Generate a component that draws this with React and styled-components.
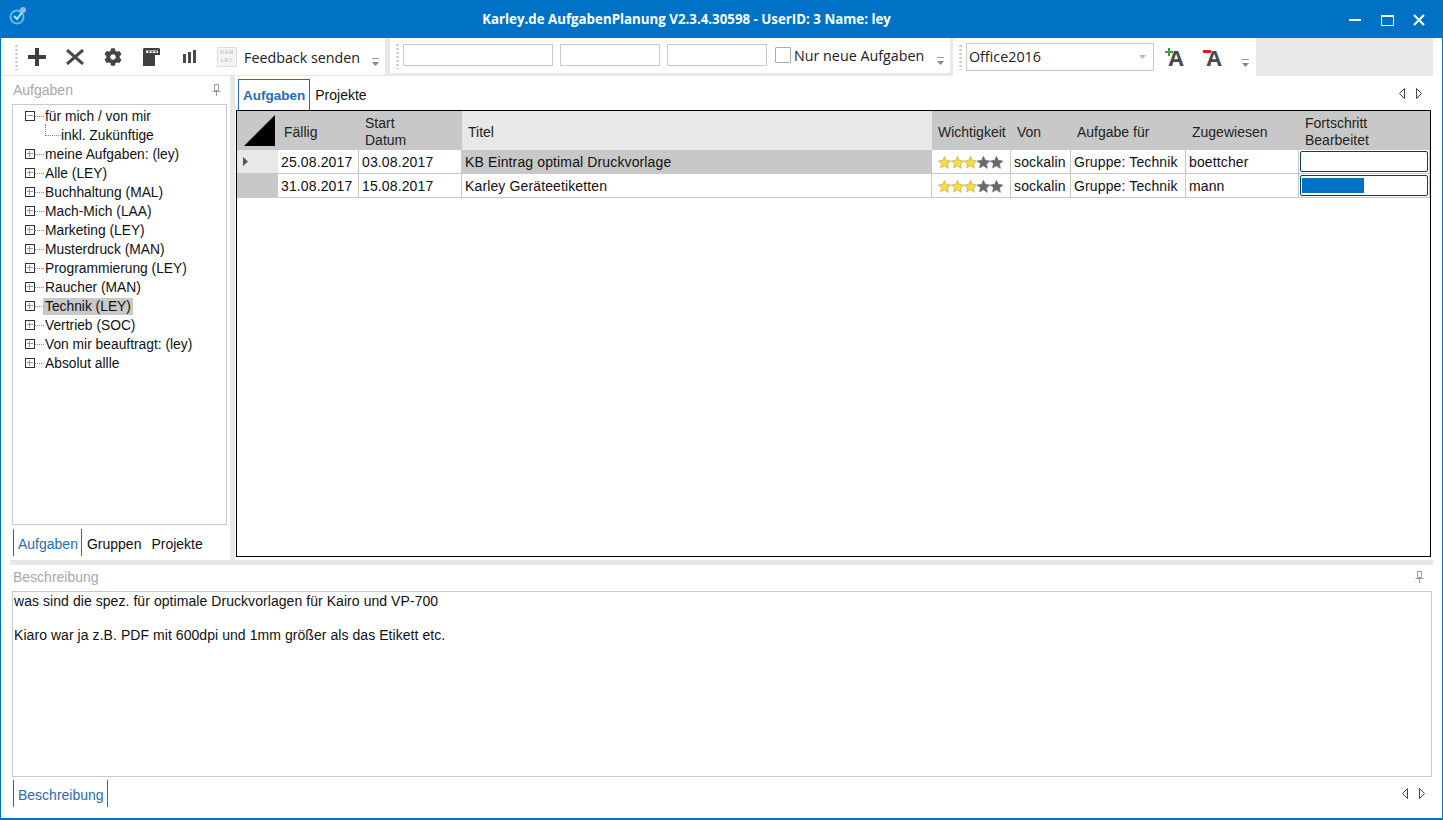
import React from "react";
import styled, { createGlobalStyle } from "styled-components";
import { FaCog } from "react-icons/fa";

const blue = "#0072c6";
const line = "#c8c8c8";
const soft = "#e8e8e8";

const GlobalStyle = createGlobalStyle`
  html, body {
    margin: 0;
    overflow: hidden;
    background: #fff;
  }
  * {
    box-sizing: border-box;
  }
`;

//window frame
const Window = styled.div`
  width: 1443px;
  height: 820px;
  display: flex;
  flex-direction: column;
  background: #fff;
  border: 1px solid ${blue};
  border-top: 0;
  border-bottom-width: 2px;
  font-family: "Liberation Sans", Arial, sans-serif;
  font-size: 14px;
  color: #111;
`;

const TitleBar = styled.div`
  height: 38px;
  flex: none;
  display: flex;
  align-items: center;
  margin: 0 -1px;
  padding: 0 8px 0 9px;
  background: ${blue};
  color: #fff;
`;

const AppIcon = styled.svg`
  width: 19px;
  height: 19px;
  flex: none;
  margin-top: -8px;
`;

const TitleText = styled.div`
  flex: 1;
  text-align: center;
  padding-left: 6px;
  font-family: "Open Sans", sans-serif;
  font-weight: 700;
  font-size: 13.3px;
`;

const WinButton = styled.div`
  width: 32px;
  height: 38px;
  padding-top: 2px;
  display: flex;
  align-items: center;
  justify-content: center;
`;

//toolbars
const ToolRow = styled.div`
  height: 38px;
  flex: none;
  display: flex;
  align-items: flex-start;
  margin-right: 9px;
  background: ${soft};
`;

const Strip = styled.div`
  display: flex;
  align-items: center;
  height: ${(p) => p.$height}px;
  width: ${(p) => p.$width}px;
  margin-left: ${(p) => p.$left || 0}px;
  padding-left: ${(p) => p.$pad}px;
  background: #fff;
  font-family: "Open Sans", sans-serif;
  font-size: 14.3px;
`;

const Grip = styled.div`
  width: 3px;
  height: 26px;
  flex: none;
  background: radial-gradient(circle, #c4c4c4 1px, transparent 1.3px) 0 0 / 3px 4px;
`;

const ToolButton = styled.div`
  width: 38px;
  height: 36px;
  flex: none;
  display: flex;
  align-items: center;
  justify-content: center;
  color: #444;
`;

const LogoBox = styled.div`
  width: 20px;
  height: 20px;
  flex: none;
  margin: 0 7px 0 9px;
  border: 1px solid #ddd;
  background: #f4f4f4;
  color: #b5b5b5;
  font-family: "Liberation Sans", sans-serif;
  font-size: 6px;
  line-height: 8px;
  letter-spacing: 0.4px;
  text-align: center;
`;

const Label = styled.span`
  white-space: nowrap;
  color: #222;
  margin-top: ${(p) => p.$top || 0}px;
`;

const Overflow = styled.svg`
  width: 7px;
  height: 8px;
  flex: none;
  margin-top: 11px;
  margin-left: ${(p) => p.$left}px;
`;

const TextInput = styled.div`
  width: ${(p) => p.$width}px;
  height: 22px;
  flex: none;
  margin-left: ${(p) => p.$left}px;
  margin-top: -2px;
  border: 1px solid ${line};
`;

const Check = styled.div`
  width: 16px;
  height: 16px;
  flex: none;
  margin: -2px 3px 0 8px;
  border: 1px solid #aaa;
  border-radius: 1px;
`;

const Combo = styled.div`
  width: 188px;
  height: 28px;
  flex: none;
  display: flex;
  align-items: center;
  justify-content: space-between;
  margin-left: 4px;
  margin-top: -1px;
  padding: 0 7px 0 2px;
  border: 1px solid ${line};
  color: #222;
`;

const FontButton = styled.div`
  position: relative;
  width: 38px;
  height: 36px;
  flex: none;
  margin-left: ${(p) => p.$left || 0}px;
  text-align: center;
  font-family: "Open Sans", sans-serif;
  font-weight: 700;
  font-size: 22px;
  line-height: 36px;
  color: #4a4a4a;
`;

const FontBadge = styled.svg`
  position: absolute;
  left: 8px;
  top: 9px;
  width: 8px;
  height: 8px;
`;

//main area
const Main = styled.div`
  flex: 1;
  min-height: 0;
  display: flex;
  flex-direction: column;
  padding: 0 9px;
`;

const TopArea = styled.div`
  height: 484px;
  flex: none;
  display: flex;
`;

const LeftPanel = styled.div`
  width: 220px;
  flex: none;
  display: flex;
  flex-direction: column;
`;

const VSplit = styled.div`
  width: 5px;
  flex: none;
  background: ${soft};
`;

const HSplit = styled.div`
  height: 5px;
  flex: none;
  background: ${soft};
`;

const PanelHead = styled.div`
  height: ${(p) => p.$height}px;
  flex: none;
  display: flex;
  align-items: center;
  justify-content: space-between;
  padding: 0 ${(p) => p.$right}px ${(p) => p.$bottom || 0}px 3px;
  color: #a8a8a8;
`;

const Tree = styled.div`
  flex: 1;
  margin: 0 3px 0 2px;
  padding-top: 2px;
  border: 1px solid ${line};
  font-size: 13.8px;
`;

const TreeRow = styled.div`
  position: relative;
  height: 19px;
  display: flex;
  align-items: center;
  padding-left: ${(p) => (p.$child ? 48 : 32)}px;
  white-space: nowrap;
  &::before {
    content: "";
    position: absolute;
    left: ${(p) => (p.$child ? 32 : 22)}px;
    top: ${(p) => (p.$child ? -2 : 9)}px;
    width: ${(p) => (p.$child ? 15 : 9)}px;
    height: ${(p) => (p.$child ? 11 : 0)}px;
    border-bottom: 1px dotted #888;
    border-left: ${(p) => (p.$child ? "1px dotted #888" : 0)};
  }
`;

const Expander = styled.div`
  position: absolute;
  left: 12px;
  top: 4px;
  width: 10px;
  height: 10px;
  border: 1px solid #333;
  background: #fff;
  z-index: 1;
  &::before {
    content: "";
    position: absolute;
    left: 1px;
    right: 1px;
    top: 3px;
    height: 1px;
    background: #999;
  }
  &::after {
    content: "";
    display: ${(p) => (p.$open ? "none" : "block")};
    position: absolute;
    left: 3px;
    top: 1px;
    bottom: 1px;
    width: 1px;
    background: #999;
  }
`;

const TreeLabel = styled.span`
  padding: 1px 2px;
  margin: 0 0 0 -2px;
  background: ${(p) => (p.$selected ? line : "transparent")};
`;

const BottomTabs = styled.div`
  height: 27px;
  flex: none;
  display: flex;
  align-items: center;
  margin: ${(p) => p.$top}px 0 ${(p) => p.$bottom}px 3px;
`;

const BottomTab = styled.div`
  height: 27px;
  display: flex;
  align-items: center;
  padding: 3px ${(p) => (p.$active ? 3 : 0)}px 0 ${(p) => (p.$active ? 4 : 0)}px;
  margin-left: ${(p) => p.$left || 0}px;
  color: ${(p) => (p.$active ? "#1f6db5" : "#111")};
  border-left: ${(p) => (p.$active ? "1px solid #1f6db5" : 0)};
  border-right: ${(p) => (p.$active ? "1px solid #1f6db5" : 0)};
`;

const RightPanel = styled.div`
  flex: 1;
  min-width: 0;
  display: flex;
  flex-direction: column;
  padding-bottom: 3px;
`;

const TabRow = styled.div`
  height: 34px;
  flex: none;
  display: flex;
  align-items: flex-end;
  padding: 0 11px 0 3px;
`;

const TopTab = styled.div`
  height: 31px;
  padding: 0 4px;
  display: flex;
  align-items: center;
  border: ${(p) => (p.$active ? "1px solid #1f6db5" : 0)};
  border-bottom: 0;
  font-weight: ${(p) => (p.$active ? 700 : 400)};
  font-size: ${(p) => (p.$active ? 13.5 : 14)}px;
  color: ${(p) => (p.$active ? "#1f6db5" : "#111")};
  margin-left: ${(p) => p.$left || 0}px;
`;

const Arrows = styled.div`
  display: flex;
  gap: 11px;
  margin-left: auto;
  align-self: center;
  margin-top: ${(p) => p.$top || 0}px;
`;

//grid
const GridBox = styled.div`
  flex: 1;
  margin: 0 2px 0 1px;
  border: 1px solid #000;
`;

const Table = styled.table`
  width: 100%;
  table-layout: fixed;
  border-collapse: separate;
  border-spacing: 0;
`;

const Head = styled.th`
  height: 39px;
  padding: ${(p) => (p.$two ? 2 : 4)}px 0 0 ${(p) => p.$pad ?? 6}px;
  background: ${(p) => (p.$light ? soft : line)};
  font-weight: 400;
  font-size: 14px;
  line-height: 17px;
  text-align: left;
  color: #222;
`;

const Corner = styled.div`
  width: 31px;
  height: 31px;
  margin: -2px 0 0 7px;
  background: #000;
  clip-path: polygon(100% 0, 100% 100%, 0 100%);
`;

const RowHead = styled.td`
  height: 24px;
  padding: 0 0 0 6px;
  background: ${(p) => (p.$current ? soft : line)};
  border-bottom: 1px solid ${line};
`;

const Cell = styled.td`
  height: 24px;
  padding: 1px 3px 0;
  background: ${(p) => (p.$hilite ? line : "#fff")};
  border-right: 1px solid ${line};
  border-bottom: 1px solid ${line};
  white-space: nowrap;
  overflow: hidden;
  letter-spacing: 0.13px;
`;

const Stars = styled.div`
  display: flex;
  margin-left: 3px;
`;

const Progress = styled.div`
  height: 21px;
  margin: -1px 0 0 -2px;
  width: 128px;
  padding: 2px 1px;
  border: 1px solid #0b3c5d;
  border-radius: 2px;
  background: #fff;
`;

const ProgressFill = styled.div`
  height: 100%;
  background: ${blue};
`;

const RowArrow = styled.svg`
  display: block;
  width: 5px;
  height: 9px;
`;

//description
const BottomArea = styled.div`
  flex: 1;
  min-height: 0;
  display: flex;
  flex-direction: column;
`;

const Description = styled.div`
  height: 186px;
  flex: none;
  margin: 0 1px 0 2px;
  padding: 1px 1px;
  border: 1px solid ${line};
  line-height: 17px;
  letter-spacing: 0.06px;
  white-space: pre-line;
`;

const BottomBar = styled.div`
  display: flex;
  align-items: center;
  justify-content: space-between;
  padding-right: 8px;
`;

function Pin() {
  return (
    <svg width="9" height="12" viewBox="0 0 9 12" fill="none" stroke="#9a9a9a">
      <path d="M2.5 .5h4v6h-4zM.5 7.5h8M4.5 8v4" />
    </svg>
  );
}

function NavArrows({ top }) {
  return (
    <Arrows $top={top}>
      <svg width="6" height="11" viewBox="0 0 6 11" fill="none" stroke="#444">
        <path d="M5.5.5v10L.5 5.5z" />
      </svg>
      <svg width="6" height="11" viewBox="0 0 6 11" fill="none" stroke="#444">
        <path d="M.5.5v10l5-5z" />
      </svg>
    </Arrows>
  );
}

function OverflowMark({ left }) {
  return (
    <Overflow $left={left} viewBox="0 0 7 8">
      <path d="M0 .5h7" stroke="#999" />
      <path d="M0 4h7L3.5 8z" fill="#888" />
    </Overflow>
  );
}

function StarIcon({ on }) {
  return (
    <svg width="13" height="13" viewBox="0 0 24 24">
      <path
        d="M12 1l3.4 7.3 7.9 1-5.800 5.500 1.500 7.900L12 18l-7 3.700 1.500-7.900L.7 9.300l7.900-1z"
        fill={on ? "#f8dc40" : "#6a6a6a"}
        stroke={on ? "#c8b050" : "#6a6a6a"}
        strokeWidth="1.5"
      />
    </svg>
  );
}

function Rating({ value }) {
  return (
    <Stars>
      {[1, 2, 3, 4, 5].map((n) => (
        <StarIcon key={n} on={n <= value} />
      ))}
    </Stars>
  );
}

const treeItems = [
  "meine Aufgaben: (ley)",
  "Alle (LEY)",
  "Buchhaltung (MAL)",
  "Mach-Mich (LAA)",
  "Marketing (LEY)",
  "Musterdruck (MAN)",
  "Programmierung (LEY)",
  "Raucher (MAN)",
  "Technik (LEY)",
  "Vertrieb (SOC)",
  "Von mir beauftragt: (ley)",
  "Absolut allle",
];

const tasks = [
  { due: "25.08.2017", start: "03.08.2017", title: "KB Eintrag optimal Druckvorlage", to: "boettcher", done: 0 },
  { due: "31.08.2017", start: "15.08.2017", title: "Karley Geräteetiketten", to: "mann", done: 50 },
];

export default function App() {
  return (
    <>
      <GlobalStyle />
      <Window>
        <TitleBar>
          <AppIcon viewBox="0 0 19 19" fill="none">
            <circle cx="8" cy="11" r="6.500" stroke="#59bdec" strokeWidth="2" />
            <path d="M5 10l3 3 6-8" stroke="#bfe6f8" strokeWidth="2" />
            <circle cx="14" cy="4" r="3" fill="#8fb8dc" />
          </AppIcon>
          <TitleText>Karley.de AufgabenPlanung V2.3.4.30598 - UserID: 3 Name: ley</TitleText>
          <WinButton>
            <svg width="12" height="2"><path d="M0 1h12" stroke="#fff" strokeWidth="2" /></svg>
          </WinButton>
          <WinButton>
            <svg width="13" height="11" fill="none" stroke="#fff"><path d="M.5 1.500h12v9H.5z" strokeWidth="1" /><path d="M0 1h13" strokeWidth="2" /></svg>
          </WinButton>
          <WinButton>
            <svg width="12" height="12" stroke="#fff" strokeWidth="2"><path d="M1 1l10 10M11 1L1 11" /></svg>
          </WinButton>
        </TitleBar>

        <ToolRow>
          <Strip $width={384} $height={37} $pad={14}>
            <Grip />
            <ToolButton>
              <svg width="18" height="18" viewBox="0 0 18 18"><path d="M0 7h7V0h4v7h7v4h-7v7H7v-7H0z" fill="#3f3f3f" /></svg>
            </ToolButton>
            <ToolButton>
              <svg width="18" height="16" viewBox="0 0 18 16" stroke="#4a4a4a" strokeWidth="3"><path d="M1 1l16 14M17 1L1 15" /></svg>
            </ToolButton>
            <ToolButton>
              <FaCog size={18} />
            </ToolButton>
            <ToolButton>
              <svg width="18" height="18" viewBox="0 0 18 18">
                <path d="M2 0h15l1 1v6h-5v11H1V1z" fill="#3f3f3f" />
                <path d="M4 2.500h12v2.500H4z" fill="#fff" />
                <path d="M6 3h2v1.500H6zM9.500 3h2v1.500h-2zM13 3h2v1.500h-2z" fill="#555" />
              </svg>
            </ToolButton>
            <ToolButton>
              <svg width="13" height="13" viewBox="0 0 13 13" fill="#4a4a4a"><path d="M0 4h3v9H0zM5 2h3v11H5zM10 0h3v13h-3z" /></svg>
            </ToolButton>
            <LogoBox>KAR<br />LEY</LogoBox>
            <Label $top={1}>Feedback senden</Label>
            <OverflowMark left={12} />
          </Strip>
          <Strip $width={560} $height={35} $left={5} $pad={6}>
            <Grip />
            <TextInput $width={150} $left={4} />
            <TextInput $width={100} $left={7} />
            <TextInput $width={100} $left={7} />
            <Check />
            <Label>Nur neue Aufgaben</Label>
            <OverflowMark left={13} />
          </Strip>
          <Strip $width={303} $height={38} $left={3} $pad={6}>
            <Grip />
            <Combo>
              <span>Office2016</span>
              <svg width="7" height="4"><path d="M0 0h7L3.500 4z" fill="#bbb" /></svg>
            </Combo>
            <FontButton $left={3}>
              A
              <FontBadge viewBox="0 0 8 8"><path d="M3 0h2v3h3v2H5v3H3V5H0V3h3z" fill="#3aa33a" /></FontBadge>
            </FontButton>
            <FontButton>
              A
              <FontBadge viewBox="0 0 8 8"><path d="M0 2h8v3H0z" fill="#d3202c" /></FontBadge>
            </FontButton>
            <OverflowMark left={9} />
          </Strip>
        </ToolRow>

        <Main>
          <TopArea>
            <LeftPanel>
              <PanelHead $height={28} $right={9}>
                Aufgaben
                <Pin />
              </PanelHead>
              <Tree>
                <TreeRow>
                  <Expander $open />
                  <TreeLabel>für mich / von mir</TreeLabel>
                </TreeRow>
                <TreeRow $child>
                  <TreeLabel>inkl. Zukünftige</TreeLabel>
                </TreeRow>
                {treeItems.map((item) => (
                  <TreeRow key={item}>
                    <Expander />
                    <TreeLabel $selected={item === "Technik (LEY)"}>{item}</TreeLabel>
                  </TreeRow>
                ))}
              </Tree>
              <BottomTabs $top={4} $bottom={4}>
                <BottomTab $active>Aufgaben</BottomTab>
                <BottomTab $left={5}>Gruppen</BottomTab>
                <BottomTab $left={10}>Projekte</BottomTab>
              </BottomTabs>
            </LeftPanel>
            <VSplit />
            <RightPanel>
              <TabRow>
                <TopTab $active>Aufgaben</TopTab>
                <TopTab $left={1}>Projekte</TopTab>
                <NavArrows />
              </TabRow>
              <GridBox>
                <Table>
                  <colgroup>
                    <col style={{ width: 41 }} />
                    <col style={{ width: 81 }} />
                    <col style={{ width: 103 }} />
                    <col style={{ width: 470 }} />
                    <col style={{ width: 79 }} />
                    <col style={{ width: 60 }} />
                    <col style={{ width: 115 }} />
                    <col style={{ width: 113 }} />
                    <col />
                  </colgroup>
                  <thead>
                    <tr>
                      <Head $two $pad={0}><Corner /></Head>
                      <Head>Fällig</Head>
                      <Head $two>Start<br />Datum</Head>
                      <Head $light>Titel</Head>
                      <Head>Wichtigkeit</Head>
                      <Head>Von</Head>
                      <Head>Aufgabe für</Head>
                      <Head>Zugewiesen</Head>
                      <Head $two>Fortschritt<br />Bearbeitet</Head>
                    </tr>
                  </thead>
                  <tbody>
                    {tasks.map((task, i) => (
                      <tr key={task.title}>
                        <RowHead $current={i === 0}>
                          {i === 0 && (
                            <RowArrow viewBox="0 0 5 9"><path d="M0 0l5 4.500L0 9z" fill="#555" /></RowArrow>
                          )}
                        </RowHead>
                        <Cell>{task.due}</Cell>
                        <Cell>{task.start}</Cell>
                        <Cell $hilite={i === 0}>{task.title}</Cell>
                        <Cell><Rating value={3} /></Cell>
                        <Cell>sockalin</Cell>
                        <Cell>Gruppe: Technik</Cell>
                        <Cell>{task.to}</Cell>
                        <Cell>
                          <Progress>
                            <ProgressFill style={{ width: `${task.done}%` }} />
                          </Progress>
                        </Cell>
                      </tr>
                    ))}
                  </tbody>
                </Table>
              </GridBox>
            </RightPanel>
          </TopArea>
          <HSplit />
          <BottomArea>
            <PanelHead $height={26} $right={9} $bottom={2}>
              Beschreibung
              <Pin />
            </PanelHead>
            <Description>
              {"was sind die spez. für optimale Druckvorlagen für Kairo und VP-700\n\nKiaro war ja z.B. PDF mit 600dpi und 1mm größer als das Etikett etc."}
            </Description>
            <BottomBar>
              <BottomTabs $top={3} $bottom={0}>
                <BottomTab $active>Beschreibung</BottomTab>
              </BottomTabs>
              <NavArrows top={3} />
            </BottomBar>
          </BottomArea>
        </Main>
      </Window>
    </>
  );
}
